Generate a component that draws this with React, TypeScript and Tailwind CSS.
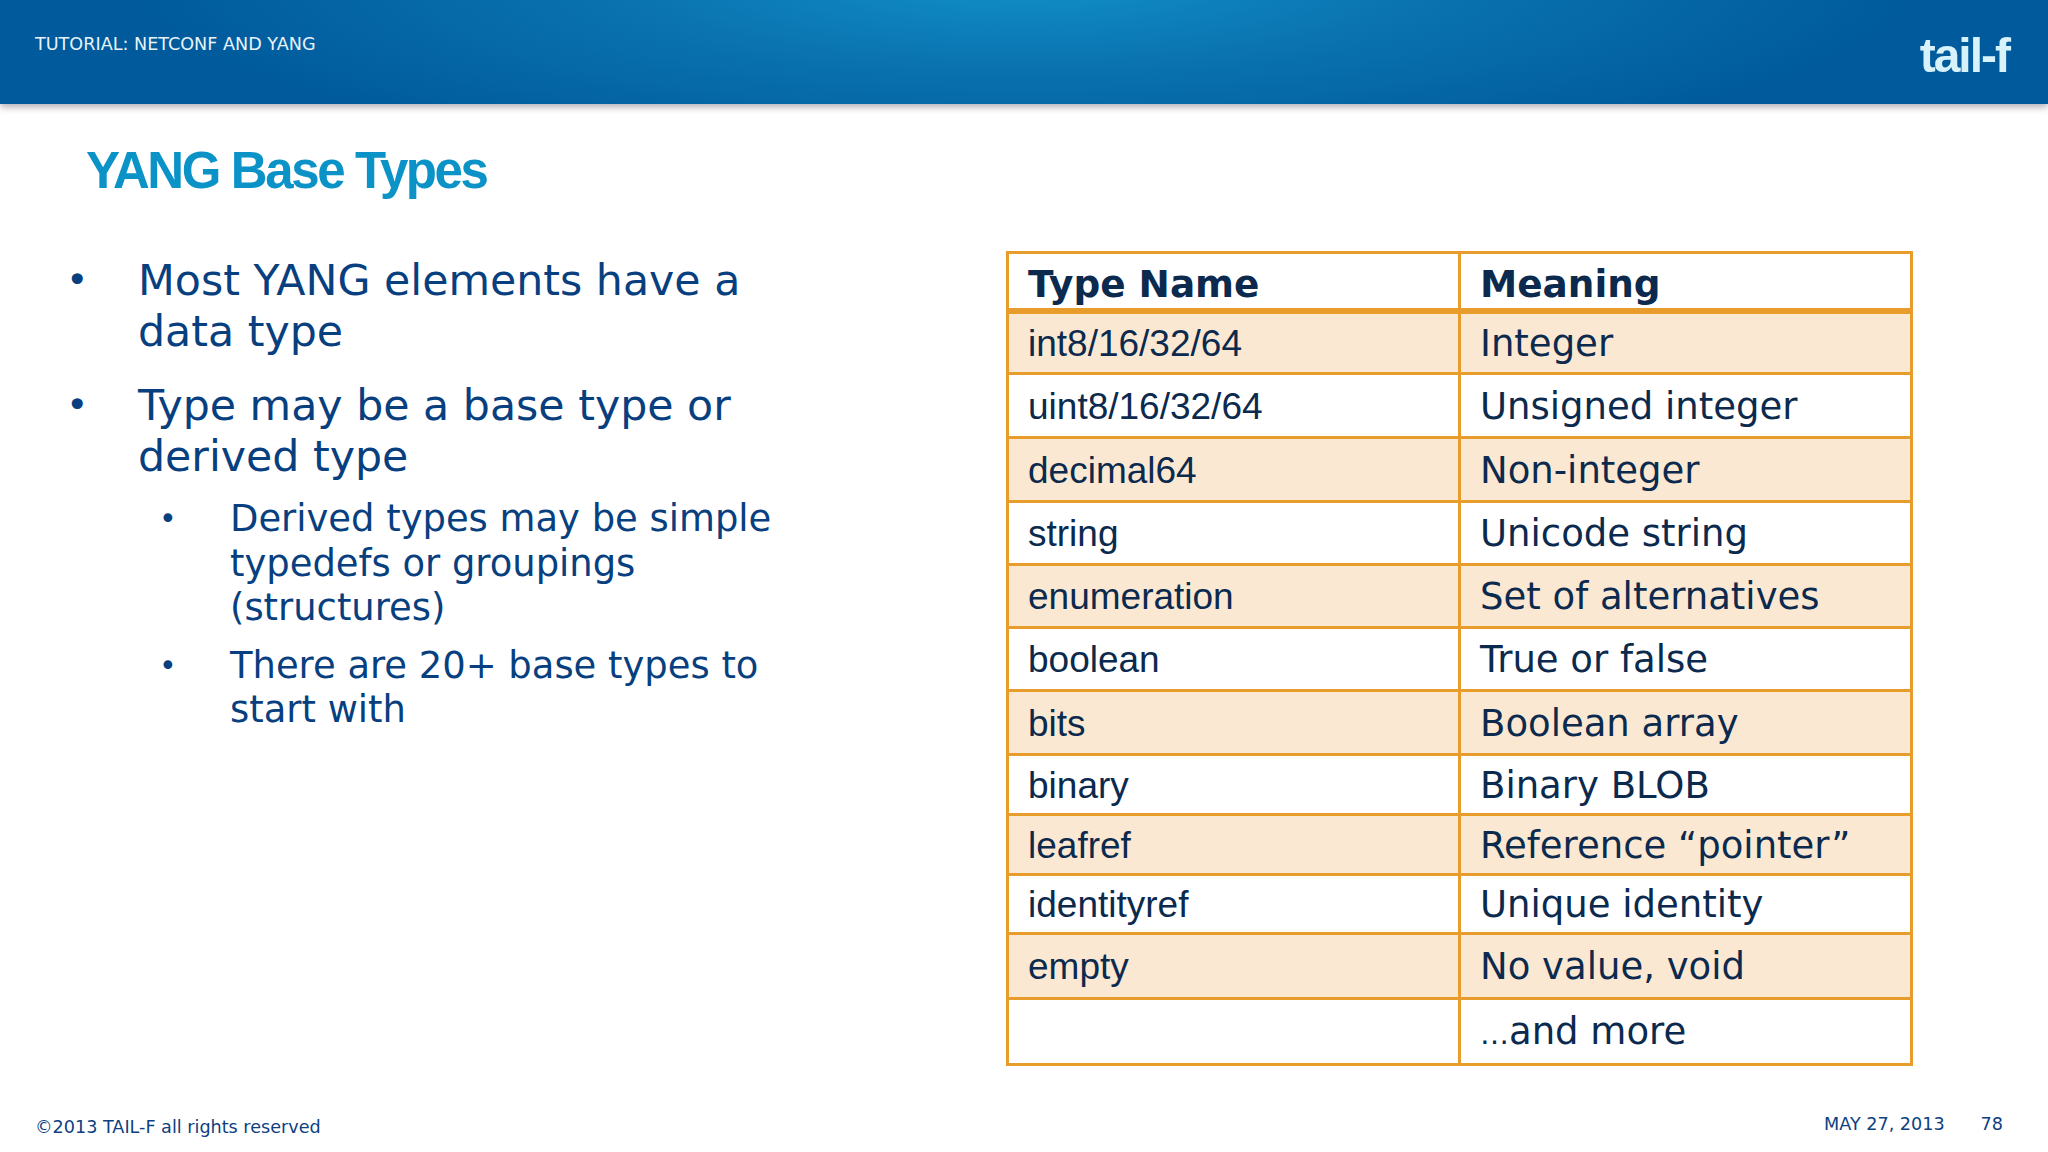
import type { ReactNode } from "react";

const rows: [string, ReactNode, number][] = [
  ["int8/16/32/64", "Integer", 63],
  ["uint8/16/32/64", "Unsigned integer", 64],
  ["decimal64", "Non-integer", 64],
  ["string", "Unicode string", 63],
  ["enumeration", "Set of alternatives", 63],
  ["boolean", "True or false", 63],
  ["bits", "Boolean array", 64],
  ["binary", "Binary BLOB", 60],
  ["leafref", "Reference “pointer”", 60],
  ["identityref", "Unique identity", 59],
  ["empty", "No value, void", 65],
  ["", <><span className="text-[29px]">…</span>and more</>, 66],
];
const dv = "font-['DejaVu_Sans',sans-serif]";
const ar = "font-['Liberation_Sans',sans-serif]";

export default function App() {
  return (
    <div className={`w-[2048px] h-[1152px] bg-white overflow-hidden flex flex-col ${dv}`}>
      <header className="relative h-[104px] shrink-0 flex items-start justify-between pl-[35px] pr-[39px] bg-[radial-gradient(ellipse_900px_190px_at_50%_-20px,#1190c8_0%,#0a73b0_45%,#005a9c_100%)] shadow-[0_3px_7px_rgba(60,50,70,0.4)]">
        <span className="mt-[34px] text-[17.6px] leading-[20px] text-[#e8f3fa]">TUTORIAL: NETCONF AND YANG</span>
        <span className={`mt-[29px] text-[48px] leading-[54px] font-bold tracking-[-2px] text-[#d8f2fb] blur-[0.6px] ${ar}`}>tail-f</span>
      </header>
      <h1 className={`mt-[36px] ml-[86px] text-[51px] leading-[62px] font-bold tracking-[-2.4px] text-[#0b93c8] ${ar}`}>YANG Base Types</h1>
      <main className="flex-1 flex items-start mt-[52px] pl-[69px]">
        <div className="w-[937px] shrink-0 text-[#08407f]">
          <ul className="text-[42.7px] leading-[51px] flex flex-col gap-[23px] w-[720px] mt-[1px]">
            <li className="flex"><span className="w-[72px] -ml-[3px] shrink-0 text-[38px]">•</span><span>Most YANG elements have a<br />data type</span></li>
            <li className="flex"><span className="w-[72px] -ml-[3px] shrink-0 text-[38px]">•</span><span>Type may be a base type or<br />derived type</span></li>
          </ul>
          <ul className="text-[36.9px] leading-[44.5px] flex flex-col gap-[13px] mt-[15px] ml-[90px] w-[720px]">
            <li className="flex"><span className="w-[71px] shrink-0 text-[30px]">•</span><span>Derived types may be simple<br />typedefs or groupings<br />(structures)</span></li>
            <li className="flex"><span className="w-[71px] shrink-0 text-[30px]">•</span><span>There are 20+ base types to<br />start with</span></li>
          </ul>
        </div>
        <table className="w-[907px] table-fixed border-collapse border-[3px] border-[#e89c2c] text-[#0b2a4e] mt-[-3px]">
          <thead>
            <tr className="border-b-[6px] border-[#e89c2c]">
              <th className="w-[452px] h-[58px] p-0 pt-[7px] leading-[44px] border-r-[3px] border-[#e89c2c] pl-[19px] text-left text-[37.4px] font-bold">Type Name</th>
              <th className="h-[58px] p-0 pt-[7px] leading-[44px] pl-[19px] text-left text-[37.4px] font-bold">Meaning</th>
            </tr>
          </thead>
          <tbody>
            {rows.map(([a, b, h], i) => (
              <tr key={i} style={{ height: h }} className={`border-t-[3px] border-[#e89c2c] ${i % 2 === 0 ? "bg-[#fbe8d2]" : "bg-white"}`}>
                <td className={`border-r-[3px] border-[#e89c2c] pl-[19px] pt-[2px] text-[37px] leading-[42px] ${ar}`}>{a}</td>
                <td className="pl-[19px] pt-[2px] text-[37px] leading-[42px]">{b}</td>
              </tr>
            ))}
          </tbody>
        </table>
      </main>
      <footer className="h-[60px] shrink-0 flex items-start justify-between pl-[35px] pr-[45px] text-[17.6px] leading-[22px] text-[#0e3f80]">
        <span className="mt-[24px]">©2013 TAIL-F all rights reserved</span>
        <span className="mt-[21px] flex gap-[36px]"><span>MAY 27, 2013</span><span>78</span></span>
      </footer>
    </div>
  );
}
